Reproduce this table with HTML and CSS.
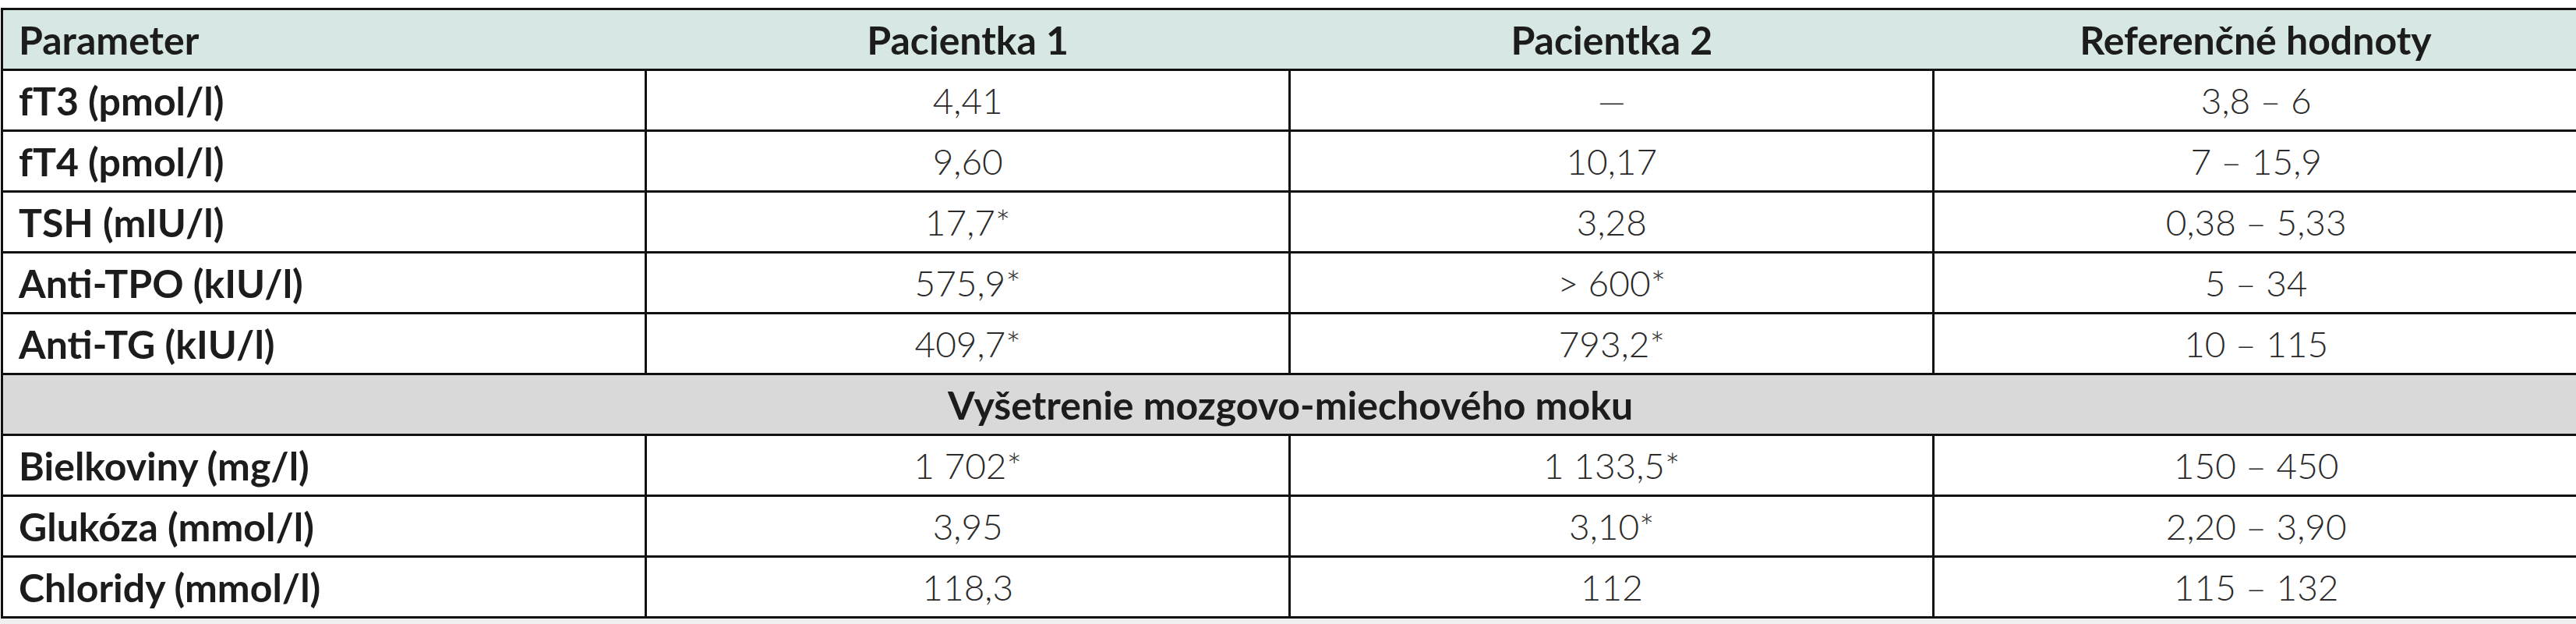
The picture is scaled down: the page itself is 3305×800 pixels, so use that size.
FILE: index.html
```html
<!DOCTYPE html>
<html lang="sk">
<head>
<meta charset="utf-8">
<title>Parametre</title>
<link rel="stylesheet" href="styles.css">
</head>
<body>
<div class="page">
<table class="lab">
<colgroup>
<col class="col"><col class="col"><col class="col"><col class="col">
</colgroup>
<thead>
<tr><th class="param">Parameter</th><th>Pacientka 1</th><th>Pacientka 2</th><th>Referenčné hodnoty</th></tr>
</thead>
<tbody>
<tr><td class="param">fT3 (pmol/l)</td><td>4,41</td><td>—</td><td>3,8 – 6</td></tr>
<tr><td class="param">fT4 (pmol/l)</td><td>9,60</td><td>10,17</td><td>7 – 15,9</td></tr>
<tr><td class="param">TSH (mIU/l)</td><td>17,7*</td><td>3,28</td><td>0,38 – 5,33</td></tr>
<tr><td class="param">Anti-TPO (kIU/l)</td><td>575,9*</td><td>&gt; 600*</td><td>5 – 34</td></tr>
<tr><td class="param">Anti-TG (kIU/l)</td><td>409,7*</td><td>793,2*</td><td>10 – 115</td></tr>
<tr class="section"><td colspan="4">Vyšetrenie mozgovo-miechového moku</td></tr>
<tr><td class="param">Bielkoviny (mg/l)</td><td>1 702*</td><td>1 133,5*</td><td>150 – 450</td></tr>
<tr><td class="param">Glukóza (mmol/l)</td><td>3,95</td><td>3,10*</td><td>2,20 – 3,90</td></tr>
<tr><td class="param">Chloridy (mmol/l)</td><td>118,3</td><td>112</td><td>115 – 132</td></tr>
</tbody>
</table>
</div>
</body>
</html>
```
FILE: styles.css
```css
html, body {
  margin: 0;
  padding: 0;
}
body {
  background: #f0f0f0;
  font-family: Lato, "Open Sans", "Liberation Sans", sans-serif;
}
.page {
  background: #ffffff;
  padding-top: 10px;
  overflow: hidden;
}
.lab {
  border-collapse: collapse;
  table-layout: fixed;
  width: 3306px;
  margin-left: 1px;
}
.col { width: 25%; }
.lab th,
.lab td {
  height: 75px;
  padding: 0;
  border-top: 3px solid #111;
  border-bottom: 3px solid #111;
  font-size: 46px;
  text-align: center;
  vertical-align: middle;
  line-height: 1;
}
.lab th {
  background: #d6e7e4;
  font-weight: 700;
  font-size: 50px;
  color: #1c1c1c;
}
.lab th.param {
  border-left: 3px solid #111;
}
.lab td {
  font-weight: 300;
  color: #2a2a2a;
  border-left: 3px solid #111;
}
.lab .param {
  text-align: left;
  padding-left: 20px;
  font-weight: 700;
  font-size: 50px;
  color: #1c1c1c;
}
.lab .section td {
  background: #d9d9d9;
  font-weight: 700;
  font-size: 50px;
  color: #1c1c1c;
}
```
